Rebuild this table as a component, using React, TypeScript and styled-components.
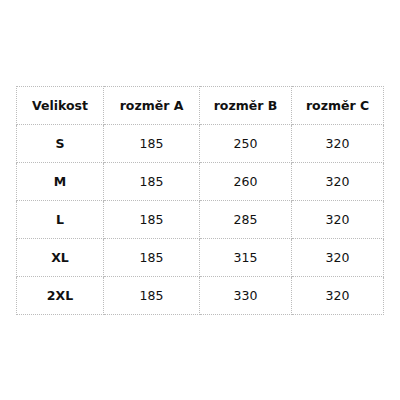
import React from "react";
import styled, { createGlobalStyle } from "styled-components";

const Global = createGlobalStyle`
  html, body { margin: 0; padding: 0; background: #fff; }
  body { font-family: "DejaVu Sans", Verdana, sans-serif; }
`;

const Page = styled.div`
  width: 400px;
  height: 400px;
  display: flex;
  align-items: center;
  justify-content: center;
`;

const Table = styled.table`
  border-collapse: collapse;
  width: 367px;
  table-layout: fixed;
  font-size: 12.5px;
  color: #111;
`;

const Cell = styled.td<{ $bold?: boolean }>`
  border: 1px dotted #bcbcbc;
  height: 37px;
  padding: 0;
  text-align: center;
  vertical-align: middle;
  font-weight: ${(p) => (p.$bold ? "bold" : "normal")};
`;

const headers = ["Velikost", "rozměr A", "rozměr B", "rozměr C"];
const widths = [87, 96, 92, 92];
const rows = [
  ["S", "185", "250", "320"],
  ["M", "185", "260", "320"],
  ["L", "185", "285", "320"],
  ["XL", "185", "315", "320"],
  ["2XL", "185", "330", "320"],
];

export default function App() {
  return (
    <>
      <Global />
      <Page>
        <Table>
          <colgroup>
            {widths.map((w, i) => (
              <col key={i} style={{ width: w }} />
            ))}
          </colgroup>
          <tbody>
            <tr>
              {headers.map((h) => (
                <Cell key={h} $bold>
                  {h}
                </Cell>
              ))}
            </tr>
            {rows.map((r) => (
              <tr key={r[0]}>
                {r.map((c, i) => (
                  <Cell key={i} $bold={i === 0}>
                    {c}
                  </Cell>
                ))}
              </tr>
            ))}
          </tbody>
        </Table>
      </Page>
    </>
  );
}
